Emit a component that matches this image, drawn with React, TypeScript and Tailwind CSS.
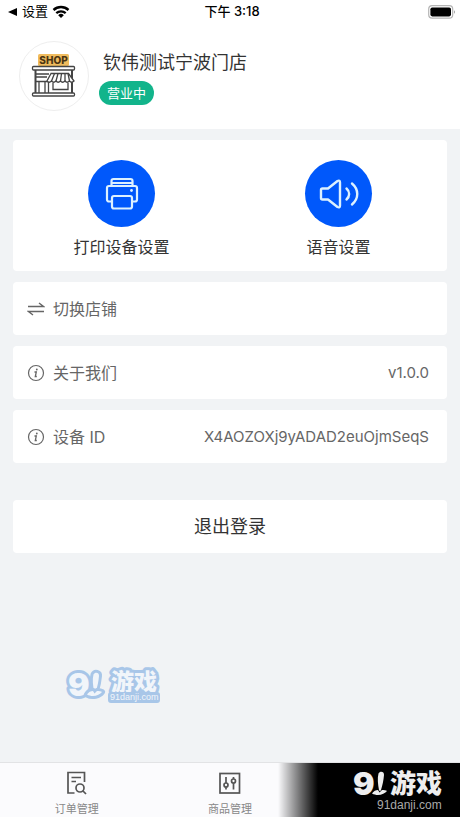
import type { ReactNode } from 'react'

const VERSION = 'v1.0.0'
const DEVICE_ID = 'X4AOZOXj9yADAD2euOjmSeqS'

function WifiIcon() {
  return (
    <svg width="18" height="14" viewBox="0 0 18 14" fill="none" aria-hidden="true">
      <path d="M1.5 5a11 11 0 0 1 15 0" stroke="#000" strokeWidth="2.4" />
      <path d="M4.3 8.2a7 7 0 0 1 9.4 0" stroke="#000" strokeWidth="2.3" />
      <path d="M9 13 6.2 10.2a4 4 0 0 1 5.6 0z" fill="#000" />
    </svg>
  )
}

function BatteryIcon() {
  return (
    <svg width="28" height="14" viewBox="0 0 28 14" fill="none" aria-hidden="true">
      <rect x="0.7" y="0.7" width="24" height="12.4" rx="3.4" stroke="#b5b5b5" strokeWidth="1.2" />
      <rect x="2.4" y="2.4" width="20.6" height="9" rx="1.8" fill="#000" />
      <path d="M26 5.2c1.4.5 1.4 3 0 3.5z" fill="#aaa" />
    </svg>
  )
}

function ShopIcon() {
  return (
    <svg width="46" height="46" viewBox="0 0 46 46" fill="none" aria-hidden="true">
      <rect x="7" y="1" width="31" height="12" rx="1.5" fill="#f0bc5e" />
      <text
        x="22.5"
        y="10.5"
        textAnchor="middle"
        fontFamily="Inter, sans-serif"
        fontWeight="800"
        fontSize="10"
        fill="#4a3413"
      >
        SHOP
      </text>
      <g stroke="#444" strokeWidth="1.3">
        <rect x="1.5" y="13.5" width="42" height="3.5" rx="1" fill="#fff" />
        <path d="M4.5 17v23.5M41 17v23.5" strokeWidth="2" />
        <path d="M5 21h13M5 24h11M5 28.5h14" />
        <path d="M20 20.5 16 28q2 2.5 4.500 0 2 2.500 4.500 0 2 2.500 4.500 0 2 2.500 4.500 0 2 2.500 4.500 0 2 2.500 4.500 0L37.500 20.500z" fill="#fff" />
        <path d="M23.500 20.500 20.500 28M27 20.500 25 28M30.500 20.500l-1 7.500M34 20.500V28M37 20.500l1.500 7.500" />
        <path d="M8 40V28.500M14 28.500V40M17.500 29v11M22 30v6.500h15V30" />
        <rect x="1.500" y="40" width="42" height="3" rx="1" fill="#fff" />
      </g>
    </svg>
  )
}

function PrinterIcon() {
  return (
    <svg width="34" height="34" viewBox="0 0 34 34" fill="none" stroke="#dcf1ff" strokeWidth="2.2" strokeLinejoin="round" aria-hidden="true">
      <path d="M6.500 9V4a2 2 0 0 1 2-2h17a2 2 0 0 1 2 2v5M6.500 6h21" />
      <path d="M7 24.500H4a2 2 0 0 1-2-2V11a2 2 0 0 1 2-2h26a2 2 0 0 1 2 2v11.500a2 2 0 0 1-2 2h-3" />
      <rect x="7" y="19" width="20" height="12.500" rx="2" />
      <circle cx="26.500" cy="13.500" r="1.400" fill="#dcf1ff" stroke="none" />
    </svg>
  )
}

function SpeakerIcon() {
  return (
    <svg width="40" height="32" viewBox="0 0 40 32" fill="none" stroke="#dcf1ff" strokeWidth="2.4" strokeLinecap="round" strokeLinejoin="round" aria-hidden="true">
      <path d="M3.500 10.500H9L18.500 3q2.500-1.200 2.500 1.500v23q0 2.700-2.500 1.500L9 21.500H3.500A1.500 1.500 0 0 1 2 20v-8a1.500 1.500 0 0 1 1.500-1.500z" />
      <path d="M27.500 10.500c3.500 3 3.500 8 0 11" />
      <path d="M33 5.500c7 6 7 15 0 21" />
    </svg>
  )
}

function SwapIcon() {
  return (
    <svg width="18" height="18" viewBox="0 0 18 18" fill="none" stroke="#666" strokeWidth="1.4" aria-hidden="true">
      <path d="M1 6.500h15.500L12 3" />
      <path d="M17 11.500H1.500L6 15" />
    </svg>
  )
}

function InfoIcon() {
  return (
    <svg width="18" height="18" viewBox="0 0 18 18" fill="none" stroke="#666" aria-hidden="true">
      <circle cx="9" cy="9" r="7.500" strokeWidth="1.2" />
      <circle cx="9.800" cy="5.500" r="0.9" fill="#666" stroke="none" />
      <path d="M7.500 8h1.800l-1 4.500h1.500" strokeWidth="1.3" />
    </svg>
  )
}

function OrdersIcon() {
  return (
    <svg width="24" height="24" viewBox="0 0 24 24" fill="none" stroke="#555" strokeWidth="1.7" aria-hidden="true">
      <path d="M9.500 22H3V1.500h16.500V11" />
      <path d="M6.500 6.500H16M6.500 10.500H11" />
      <circle cx="15" cy="17" r="4" />
      <path d="m18 20 3 3" />
    </svg>
  )
}

function GoodsIcon() {
  return (
    <svg width="24" height="24" viewBox="0 0 24 24" fill="none" stroke="#555" strokeWidth="1.7" aria-hidden="true">
      <rect x="2" y="2.500" width="19.500" height="19.500" />
      <path d="M8 6v6M8 16v2.500M15.500 6v2M15.500 12v6.500" />
      <circle cx="8" cy="14" r="2" />
      <circle cx="15.500" cy="10" r="2" />
    </svg>
  )
}

// the "91" mark: a heavy nine and a pin standing on a small base
function BrandShapes() {
  return (
    <>
      <text x="1" y="32" fontFamily="Inter, sans-serif" fontWeight="900" fontSize="32">
        9
      </text>
      <path d="M26.500 10.500c1.500-3 6-2 5.500 1.500-.5 5.500-1.500 10-3 15-.3 1.200-1.800 1.200-2 0-1-5.500-1.800-12-.5-16.500z" />
      <path d="M20 30.500c1.500-2.500 4-3.500 6-3.500l1.500 2.500L30 27c2 0 4 .3 5 1-2.500 3.500-9.500 5.500-15 2.500z" />
    </>
  )
}

function FooterBrand() {
  return (
    <svg width="108" height="54" viewBox="0 0 108 54" fill="#eee" role="img" aria-label="91游戏">
      <BrandShapes />
      <text x="38" y="30" fontFamily="'Noto Sans CJK SC', sans-serif" fontWeight="900" fontSize="26">
        游戏
      </text>
      <text x="25" y="46" fontFamily="'Liberation Sans', sans-serif" fontSize="12" fill="#aaa">
        91danji.com
      </text>
    </svg>
  )
}

function FloatingBrand() {
  return (
    <svg width="104" height="48" viewBox="0 0 104 48" fill="#f1f5fa" role="img" aria-label="91游戏">
      <g stroke="#a8c6e8" strokeWidth="6" strokeLinejoin="round" paintOrder="stroke">
        <g transform="translate(5 2)">
          <BrandShapes />
        </g>
        <text x="49" y="28" fontFamily="'Noto Sans CJK SC', sans-serif" fontWeight="900" fontSize="23">
          游戏
        </text>
      </g>
      <rect x="46" y="30" width="52" height="11" rx="3" fill="#a8c6e8" />
      <text x="48" y="38" fontFamily="'Liberation Sans', sans-serif" fontSize="9">
        91danji.com
      </text>
    </svg>
  )
}

function ActionButton({ icon, label }: { icon: ReactNode; label: string }) {
  return (
    <button type="button" className="flex flex-col items-center gap-2">
      <span className="flex size-[67px] items-center justify-center rounded-full bg-[#0058fb]">{icon}</span>
      <span className="text-base leading-6 text-[#333]">{label}</span>
    </button>
  )
}

function SettingRow({ icon, label, value }: { icon: ReactNode; label: string; value?: string }) {
  return (
    <button type="button" className="flex h-[53px] w-full items-center gap-2 rounded bg-white pl-3.5 pr-[18px] text-[#666]">
      {icon}
      <span className="text-base">{label}</span>
      {value && <span className="ml-auto pt-0.5 text-[15px]">{value}</span>}
    </button>
  )
}

function TabLink({ icon, label }: { icon: ReactNode; label: string }) {
  return (
    <a href="#" className="flex flex-col items-center gap-1 pt-2 text-[#888]">
      {icon}
      <span className="text-[11px] leading-5">{label}</span>
    </a>
  )
}

export default function App() {
  return (
    <div className="flex min-h-screen flex-col bg-[#f1f3f5] font-['Inter','Noto_Sans_CJK_SC',sans-serif]">
      <header className="bg-white">
        <div className="grid h-6 grid-cols-3 items-center pl-2 pr-1 text-[13px] text-black">
          <div className="flex items-center gap-1">
            <svg width="10" height="8" viewBox="0 0 10 8" aria-hidden="true">
              <path d="M0 4 9 0v8z" />
            </svg>
            <span>设置</span>
            <WifiIcon />
          </div>
          <span className="text-center font-medium">下午 3:18</span>
          <div className="flex justify-end">
            <BatteryIcon />
          </div>
        </div>
        <div className="flex items-start gap-2.5 px-[19px] pb-[18px] pt-[17px]">
          <div className="flex size-[70px] items-center justify-center rounded-full border border-[#eee]">
            <ShopIcon />
          </div>
          <div className="flex flex-col items-start gap-1 pt-2">
            <h1 className="pl-1 text-lg leading-7 text-[#333]">钦伟测试宁波门店</h1>
            <span className="rounded-full bg-[#12b48b] px-2 text-[13px] leading-6 text-white">营业中</span>
          </div>
        </div>
      </header>

      <main className="flex flex-1 flex-col gap-[11px] px-[13px] pt-[11px]">
        <section className="grid h-[131px] grid-cols-2 rounded bg-white pt-5">
          <ActionButton icon={<PrinterIcon />} label="打印设备设置" />
          <ActionButton icon={<SpeakerIcon />} label="语音设置" />
        </section>
        <SettingRow icon={<SwapIcon />} label="切换店铺" />
        <SettingRow icon={<InfoIcon />} label="关于我们" value={VERSION} />
        <SettingRow icon={<InfoIcon />} label="设备 ID" value={DEVICE_ID} />
        <button type="button" className="mt-[26px] h-[53px] rounded bg-white text-lg text-[#333]">
          退出登录
        </button>
      </main>

      <div className="absolute left-[62px] top-[662px]">
        <FloatingBrand />
      </div>

      <nav className="relative grid h-[55px] grid-cols-3 border-t border-[#e2e3e5] bg-[#fbfbfd]">
        <TabLink icon={<OrdersIcon />} label="订单管理" />
        <TabLink icon={<GoodsIcon />} label="商品管理" />
        <div className="absolute inset-y-0 right-0 flex w-[182px] justify-end bg-linear-to-r from-transparent to-black to-[40px]">
          <FooterBrand />
        </div>
      </nav>
    </div>
  )
}
